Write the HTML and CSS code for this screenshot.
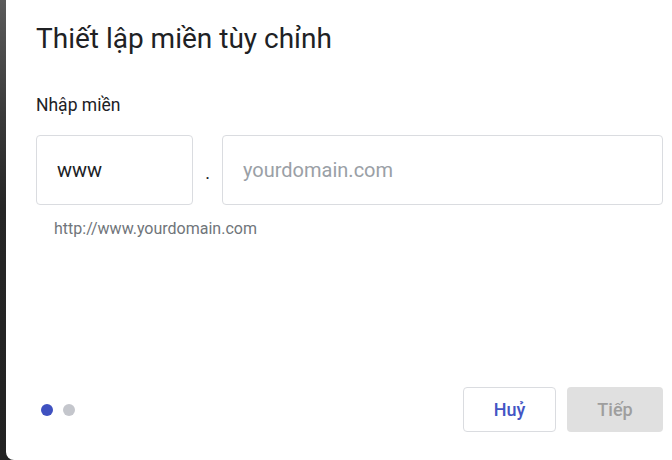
FILE: index.html
```html
<!DOCTYPE html>
<html lang="vi">
<head>
  <meta charset="UTF-8" />
  <title>Thiết lập miền tùy chỉnh</title>
  <link rel="stylesheet" href="styles.css">
</head>
<body>

  <div class="dialog">
    <h2 class="title">Thiết lập miền tùy chỉnh</h2>
    <label class="label" for="domain">Nhập miền</label>
    <div class="domain-row">
      <input class="field sub" type="text" value="www" />
      <span class="dot">.</span>
      <input class="field main" id="domain" type="text" placeholder="yourdomain.com" />
    </div>
    <p class="hint">http://www.yourdomain.com</p>

    <div class="footer">
      <div class="steps">
        <span class="step active"></span>
        <span class="step"></span>
      </div>
      <div class="actions">
        <button class="btn cancel">Huỷ</button>
        <button class="btn next" disabled>Tiếp</button>
      </div>
    </div>
  </div>

</body>
</html>
```

FILE: styles.css
```css
html, body {
  margin: 0;
  height: 100%;
}
body {
  font-family: Roboto, "Noto Sans", Arial, sans-serif;
  background: linear-gradient(180deg, #5b5b5b 0%, #3a3a3a 25%, #262626 45%, #222 100%);
  overflow: hidden;
}
.dialog {
  margin-left: 6px;
  height: 460px;
  box-sizing: border-box;
  background: white;
  border-radius: 0 0 0 8px;
  padding: 21px 9px 28px 30px;
  display: flex;
  flex-direction: column;
}
.title {
  margin: 0;
  font-size: 28px;
  line-height: 36px;
  font-weight: 400;
  color: #202124;
}
.label {
  margin-top: 36px;
  font-size: 17.5px;
  line-height: 24px;
  color: #202124;
}
.domain-row {
  display: flex;
  align-items: center;
  margin-top: 18px;
}
.field {
  box-sizing: border-box;
  height: 70px;
  border: 1px solid #dadce0;
  border-radius: 4px;
  padding: 0 20px;
  font-family: Roboto, Arial, sans-serif;
  font-size: 20px;
  color: #202124;
  outline: none;
}
.field::placeholder {
  color: #9aa0a6;
}
.sub {
  width: 157px;
}
.main {
  flex: 1;
  min-width: 0;
}
.dot {
  width: 29px;
  text-align: center;
  font-size: 18px;
  color: #202124;
  padding-top: 4px;
}
.hint {
  margin: 14px 0 0 18px;
  font-size: 16px;
  line-height: 20px;
  color: #70757a;
}
.footer {
  margin-top: auto;
  display: flex;
  align-items: center;
  justify-content: space-between;
}
.steps {
  display: flex;
  gap: 10px;
  padding-left: 5px;
}
.step {
  width: 12px;
  height: 12px;
  border-radius: 50%;
  background: #c4c6cc;
}
.step.active {
  background: #3f51c0;
}
.actions {
  display: flex;
  gap: 11px;
}
.btn {
  height: 45px;
  border-radius: 4px;
  font-family: Roboto, Arial, sans-serif;
  font-size: 18px;
  font-weight: 500;
  padding: 0;
}
.cancel {
  width: 93px;
  background: white;
  border: 1px solid #dadce0;
  color: #4355c4;
}
.next {
  width: 96px;
  background: #e0e0e0;
  border: none;
  color: #9e9e9e;
}
```
